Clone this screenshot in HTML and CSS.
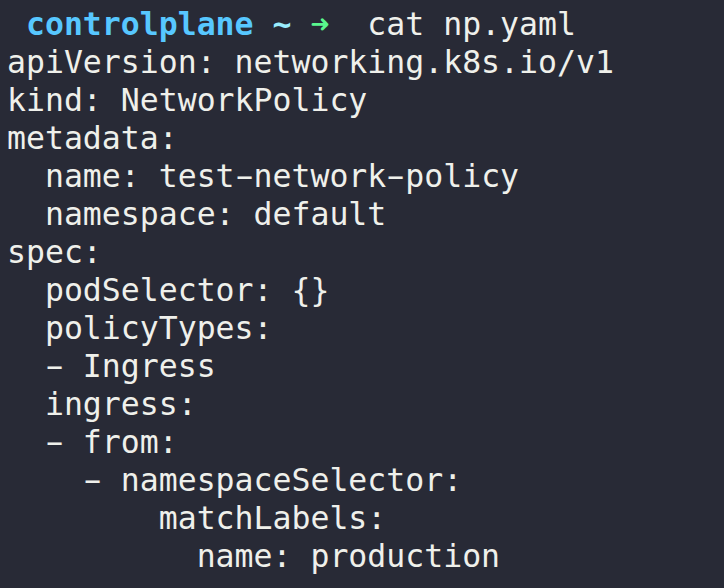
FILE: index.html
```html
<!DOCTYPE html>
<html>
<head>
<meta charset="utf-8">
<link rel="stylesheet" href="styles.css">
</head>
<body>
<pre class="term"><span class="host"> controlplane</span> <span class="tilde">~</span> <span class="arrow">➜</span>  cat np.yaml
apiVersion: networking.k8s.io/v1
kind: NetworkPolicy
metadata:
  name: test<span class="d">-</span>network<span class="d">-</span>policy
  namespace: default
spec:
  podSelector: {}
  policyTypes:
  <span class="d">-</span> Ingress
  ingress:
  <span class="d">-</span> from:
    <span class="d">-</span> namespaceSelector:
        matchLabels:
          name: production
</pre>
</body>
</html>
```
FILE: styles.css
```css
html, body {
  margin: 0;
  padding: 0;
  background: #282a36;
  width: 724px;
  height: 588px;
  overflow: hidden;
}
.term {
  margin: 0;
  padding: 5px 0 0 7px;
  font-family: "DejaVu Sans Mono", monospace;
  font-size: 31.5px;
  line-height: 38px;
  color: #eff0eb;
  white-space: pre;
}
.d {
  display: inline-block;
  transform: scaleX(1.75);
}
.host {
  color: #57c7ff;
  font-weight: bold;
}
.tilde {
  color: #9aedfe;
  font-weight: bold;
}
.arrow {
  color: #5af78e;
  font-weight: bold;
}
```
